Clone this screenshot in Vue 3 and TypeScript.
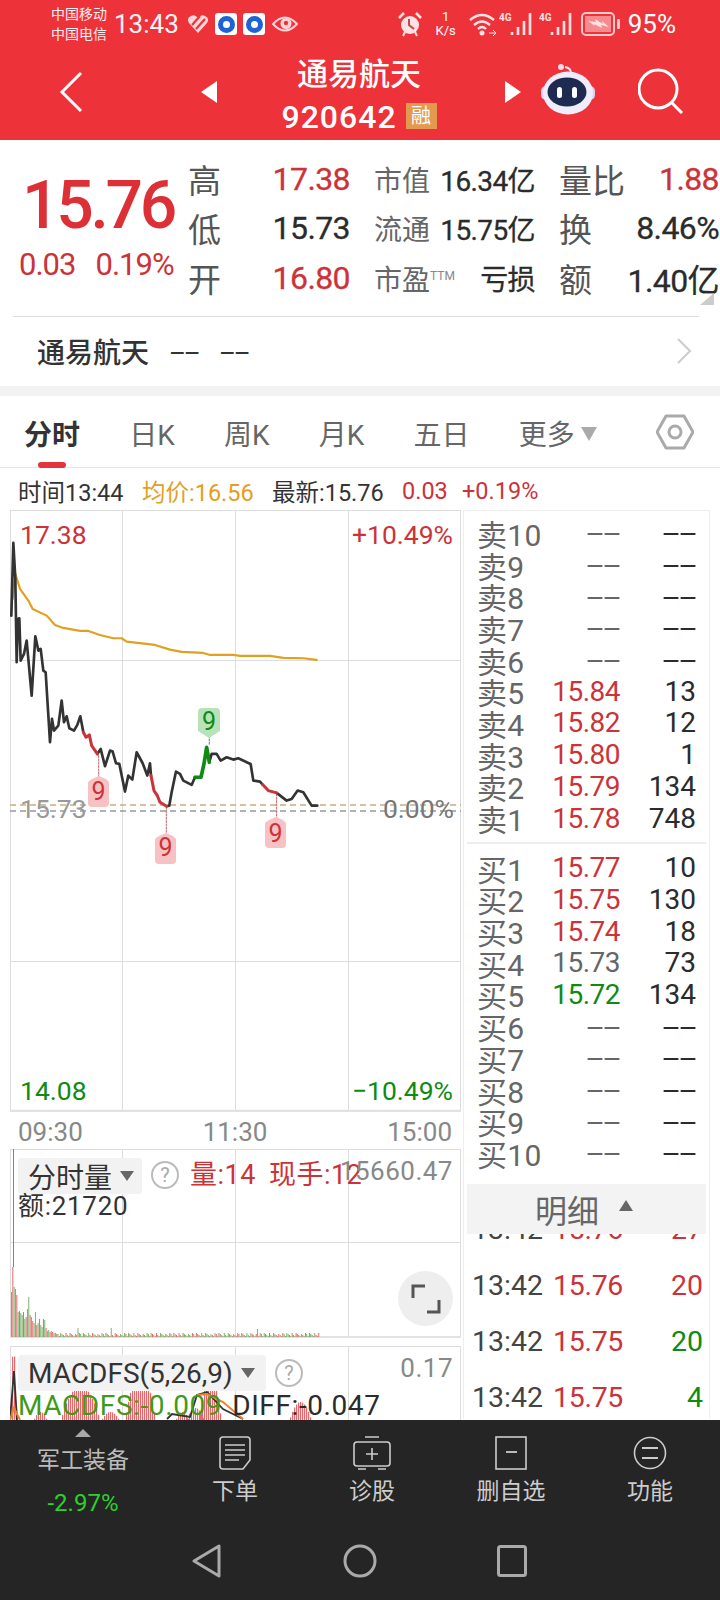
<script setup lang="ts">
const sell = [
  ['卖10', '--', '--', 'g'], ['卖9', '--', '--', 'g'], ['卖8', '--', '--', 'g'], ['卖7', '--', '--', 'g'], ['卖6', '--', '--', 'g'],
  ['卖5', '15.84', '13', 'r'], ['卖4', '15.82', '12', 'r'], ['卖3', '15.80', '1', 'r'], ['卖2', '15.79', '134', 'r'], ['卖1', '15.78', '748', 'r'],
]
const buy = [
  ['买1', '15.77', '10', 'r'], ['买2', '15.75', '130', 'r'], ['买3', '15.74', '18', 'r'], ['买4', '15.73', '73', 'g'], ['买5', '15.72', '134', 'v'],
  ['买6', '--', '--', 'g'], ['买7', '--', '--', 'g'], ['买8', '--', '--', 'g'], ['买9', '--', '--', 'g'], ['买10', '--', '--', 'g'],
]
const ticks = [
  ['13:42', '15.76', '20', 'r'], ['13:42', '15.75', '20', 'v'], ['13:42', '15.75', '4', 'v'],
]
const tabs = ['日K', '周K', '月K', '五日']
const quote = [
  { a: '高', av: '17.38', ac: 'r', b: '市值', bv: '16.34亿', c: '量比', cv: '1.88', cc: 'r' },
  { a: '低', av: '15.73', ac: 'k', b: '流通', bv: '15.75亿', c: '换', cv: '8.46%', cc: 'k' },
  { a: '开', av: '16.80', ac: 'r', b: '市盈', bv: '亏损', c: '额', cv: '1.40亿', cc: 'k' },
]
const pts = (a: number[][]) => a.map((p) => p.join(',')).join(' ')
const black = [
  [[34,290],[40,72],[46,180],[50,430],[54,300],[58,298],[62,425],[72,405],[80,365],[95,530],[106,352],[115,395],[122,390],[130,455],[137,460],[150,670],[156,600],[162,635],[175,620],[185,545],[192,610],[200,592],[208,628],[222,635],[232,618],[241,592],[250,640]],
  [[292,705],[302,690],[315,742],[330,695],[338,698],[348,733],[358,735],[375,818],[385,770],[397,782],[410,700],[428,733],[442,770],[450,733],[453,770]],
  [[500,862],[508,860],[515,820],[528,758],[540,765],[550,785],[575,798],[585,775]],
  [[628,730],[635,705],[650,705],[662,725],[680,715],[700,722],[715,718],[745,732],[752,735],[760,785],[780,788],[788,797]],
  [[830,822],[860,845],[875,840],[893,815],[910,820],[935,860],[952,860]],
].map(pts)
const red = [
  [[250,640],[258,655],[268,648],[275,680],[292,705]],
  [[453,770],[462,815],[472,830],[480,850],[500,862]],
  [[788,797],[805,815],[830,822]],
].map(pts)
const green = pts([[585,775],[603,775],[612,735],[620,685],[628,730]])
const avg = pts([[38,240],[46,165],[60,210],[85,245],[98,270],[140,290],[165,318],[190,327],[240,336],[265,336],[300,348],[340,358],[365,358],[380,368],[465,378],[510,392],[545,399],[610,402],[630,408],[700,408],[720,411],[810,411],[850,417],[910,418],[950,423]])

const tagUp = (x: number, y: number) =>
  `M${x} ${y + 6} L${x + 4} ${y + 3} L${x + 11} ${y} L${x + 18} ${y + 3} L${x + 21} ${y + 6} V${y + 27} Q${x + 21} ${y + 31} ${x + 17} ${y + 31} H${x + 4} Q${x} ${y + 31} ${x} ${y + 27} Z`
const tagDown = (x: number, y: number) =>
  `M${x} ${y + 4} Q${x} ${y} ${x + 4} ${y} H${x + 18} Q${x + 22} ${y} ${x + 22} ${y + 4} V${y + 23} L${x + 11} ${y + 30} L${x} ${y + 23} Z`
const pinks = [
  { d: tagUp(78, 266), x: 88.5, y: 290 },
  { d: tagUp(145, 323), x: 155.5, y: 346 },
  { d: tagUp(255, 307), x: 265.5, y: 332 },
]

const head = [45,70,50,48,42,25,26,24,22,25,18,20,28,40,22,20,16,14,25,12,14,18,12,10,18,17,9,6,7,5,6,5,4,4,3,3]
const volBars = Array.from({ length: 232 }, (_, i) => {
  const seed = (i * 37 + 11) % 17
  let h = i < head.length ? head[i] : 1 + (seed % 4)
  if (i === 50 || i === 75) h = 9
  if (i === 185) h = 8
  return { x: 11 + i * 1.33, h, up: (i * 7 + 3) % 5 < 2 }
})
const humps = [[13, 70, 3], [40, 8, 6], [80, 34, 18], [110, 8, 8], [140, 48, 14], [182, 8, 6], [195, 12, 8], [210, 44, 10], [300, 18, 10]]
const macdBars: { x: number; h: number }[] = []
for (const [cx, peak, w] of humps) {
  for (let x = cx - w; x <= cx + w; x += 2) {
    const d = Math.abs(x - cx) / w
    macdBars.push({ x, h: peak * (1 - d * d * 0.85) })
  }
}
</script>

<template>
  <div class="page">
    <header class="head">
      <div class="status">
        <div class="carriers"><span>中国移动</span><span>中国电信</span></div>
        <span class="clock">13:43</span>
        <svg class="heart" width="22" height="20" viewBox="0 0 22 20"><path d="M11 19 L2 9 Q-1 4 4 2 Q8 0 11 4 Q14 0 18 2 Q23 4 20 9 Z" fill="#ffd5d7"/><path d="M5 11 L13 2 M9 15 L18 5" stroke="#ee323a" stroke-width="2.2"/></svg>
        <span class="app"><i></i></span>
        <span class="app"><i></i></span>
        <svg class="eye" width="26" height="20" viewBox="0 0 26 20"><path d="M1 10 Q13 -3 25 10 Q13 23 1 10 Z" fill="none" stroke="#ffd5d7" stroke-width="2"/><circle cx="14" cy="9.500" r="5.500" fill="#ffd5d7"/><circle cx="14" cy="9" r="2.200" fill="#ee323a"/></svg>
        <div class="grow"></div>
        <svg class="s-alarm" width="24" height="26" viewBox="0 0 24 26"><circle cx="12" cy="14" r="9" fill="#ffe3e4"/><path d="M11 8 V14 L16 18" fill="none" stroke="#c9434a" stroke-width="2"/><path d="M1 7 L6 2 M23 7 L18 2" stroke="#ffe3e4" stroke-width="2.500"/><path d="M5 25 L7 21 M19 25 L17 21" stroke="#ffe3e4" stroke-width="2"/></svg>
        <div class="speed"><span>1</span><span>K/s</span></div>
        <svg class="s-wifi" width="28" height="26" viewBox="0 0 28 26"><path d="M1 9 Q13 -1 25 9 M5 14 Q13 7 21 14 M9 18 Q13 14 17 18" fill="none" stroke="#ffe3e4" stroke-width="2.400"/><circle cx="13" cy="22" r="2.500" fill="#ffe3e4"/><path d="M20 22 H27 M24 19 L27 22 L24 25" fill="none" stroke="#ffe3e4" stroke-width="1"/></svg>
        <svg class="s-sig" width="34" height="26" viewBox="0 0 34 26"><text x="0" y="10" class="mini">4G</text><path d="M13 24V21M19 24V16M25 24V10M31 24V2" stroke="#ffe3e4" stroke-width="2.600"/></svg>
        <svg class="s-sig2" width="34" height="26" viewBox="0 0 34 26"><text x="0" y="10" class="mini">4G</text><path d="M13 24V21M19 24V16M25 24V10M31 24V2" stroke="#ffe3e4" stroke-width="2.600"/></svg>
        <svg class="s-bat" width="40" height="24" viewBox="0 0 40 24"><rect x="1" y="1" width="32" height="22" rx="4" fill="none" stroke="#ffc9cc" stroke-width="2"/><rect x="4" y="4" width="26" height="16" fill="#f58a8f"/><path d="M7 9 L15 10 L14 7 L22 12 L21 9 L28 15 L20 13 L21 16 L13 12 L14 14 Z" fill="#ffe3e4"/><rect x="36" y="7" width="3" height="10" rx="1" fill="#ffc9cc"/></svg>
        <span class="pct">95%</span>
      </div>
      <div class="nav">
        <svg class="back" width="26" height="42" viewBox="0 0 26 42"><path d="M23 2 L4 21 L23 40" fill="none" stroke="#fff" stroke-width="3"/></svg>
        <svg class="tri-l" width="16" height="22" viewBox="0 0 16 22"><path d="M16 0 V22 L0 11 Z" fill="#fff"/></svg>
        <div class="title">
          <span class="name">通易航天</span>
          <div class="codeline"><span class="code">920642</span><span class="rong">融</span></div>
        </div>
        <svg class="tri-r" width="16" height="22" viewBox="0 0 16 22"><path d="M0 0 V22 L16 11 Z" fill="#fff"/></svg>
        <svg class="robot" width="56" height="52" viewBox="0 0 56 52"><path d="M31 9 Q31 4 25 3" fill="none" stroke="#e8e4f8" stroke-width="2"/><circle cx="21" cy="3" r="3" fill="#f3d7e2"/><rect x="1" y="22" width="54" height="14" rx="5" fill="#d9d2f2"/><ellipse cx="28" cy="29" rx="25" ry="21.500" fill="#f0edfb"/><ellipse cx="27" cy="28" rx="19.500" ry="14.500" fill="#1e2a4f"/><rect x="17" y="23" width="5" height="11" rx="2.500" fill="#fff"/><rect x="32" y="23" width="5" height="11" rx="2.500" fill="#fff"/></svg>
        <svg class="search" width="46" height="46" viewBox="0 0 46 46"><circle cx="20" cy="21" r="19" fill="none" stroke="#fff" stroke-width="3"/><path d="M34 35 L44 45" stroke="#fff" stroke-width="3"/></svg>
      </div>
    </header>

    <section class="summary">
      <div class="price">
        <div class="big">15.76</div>
        <div class="chg"><span>0.03</span><span>0.19%</span></div>
      </div>
      <div class="quote">
        <template v-for="q in quote" :key="q.a">
          <div class="cell"><span class="lab lg">{{ q.a }}</span><span class="val" :class="q.ac">{{ q.av }}</span></div>
          <div class="cell"><span class="lab md">{{ q.b }}<sup v-if="q.b === '市盈'">TTM</sup></span><span class="val sm k">{{ q.bv }}</span></div>
          <div class="cell"><span class="lab lg">{{ q.c }}</span><span class="val" :class="q.cc">{{ q.cv }}</span></div>
        </template>
        <i class="corner"></i>
      </div>
    </section>
    <div class="company">
      <span class="cname">通易航天</span>
      <span class="dash">--</span>
      <span class="dash">--</span>
      <svg class="more" width="16" height="28" viewBox="0 0 16 28"><path d="M2 2 L14 14 L2 26" fill="none" stroke="#ccc" stroke-width="2"/></svg>
    </div>
    <div class="band"></div>

    <nav class="tabs">
      <span class="tab on">分时<i></i></span>
      <span v-for="t in tabs" :key="t" class="tab">{{ t }}</span>
      <span class="tab">更多<b class="caret"></b></span>
      <svg class="hex" width="38" height="38" viewBox="0 0 38 38"><path d="M10 3 H28 L37 19 L28 35 H10 L1 19 Z" fill="none" stroke="#aaa" stroke-width="3" stroke-linejoin="round"/><circle cx="19" cy="19" r="6" fill="none" stroke="#aaa" stroke-width="3"/></svg>
    </nav>
    <div class="info">
      <span class="i1">时间13:44</span>
      <span class="i2">均价:16.56</span>
      <span class="i3">最新:15.76</span>
      <span class="i4">0.03</span>
      <span class="i5">+0.19%</span>
    </div>

    <main class="main">
      <div class="left">
        <div class="chart">
          <svg class="plot" width="453" height="602" viewBox="0 0 453 602">
            <path d="M0.500 0V602M112.500 0V602M225.500 0V602M338.500 0V602M450.500 0V602M0 0.500H451M0 150.500H451M0 451.500H451" stroke="#ddd" stroke-width="1" fill="none"/>
            <path d="M0 601H451" stroke="#e2e2e2" stroke-width="2.500"/>
            <path d="M0 295H451" stroke="#c9ad7f" stroke-width="1.500" stroke-dasharray="6 4" />
            <path d="M0 301H451" stroke="#999" stroke-width="1.500" stroke-dasharray="6 4" />
            <g transform="translate(-10 -511) scale(.3333) translate(0 1560)" fill="none" stroke-linejoin="round" stroke-linecap="round">
              <polyline :points="avg" stroke="#e2a01f" stroke-width="6.500"/>
              <polyline v-for="(p, i) in black" :key="i" :points="p" stroke="#333" stroke-width="8"/>
              <polyline v-for="(p, i) in red" :key="'r' + i" :points="p" stroke="#cc3338" stroke-width="9"/>
              <polyline :points="green" stroke="#0f8a12" stroke-width="11"/>
              <path d="M296 710V775M499 865V940M830 825V900" stroke="#b5474c" stroke-width="2.500" stroke-dasharray="6 4"/>
              <path d="M628 650V680" stroke="#0f8a12" stroke-width="2.500" stroke-dasharray="6 4"/>
            </g>
            <g class="badge">
              <g v-for="(b, i) in pinks" :key="i">
                <path :d="b.d" fill="#f7c2c4"/>
                <text :x="b.x" :y="b.y" fill="#cc3338">9</text>
              </g>
              <path :d="tagDown(188, 198)" fill="#b8e2b9"/>
              <text x="199" y="220" fill="#0f8a12">9</text>
            </g>
          </svg>
          <span class="ax tl r">17.38</span>
          <span class="ax tr r">+10.49%</span>
          <span class="ax ml">15.73</span>
          <span class="ax mr">0.00%</span>
          <span class="ax bl v">14.08</span>
          <span class="ax br v">−10.49%</span>
        </div>
        <div class="times"><span>09:30</span><span>11:30</span><span>15:00</span></div>
        <div class="vol">
          <svg class="plot" width="453" height="189" viewBox="0 0 453 189">
            <path d="M0.500 0V189M112.500 0V189M225.500 0V189M338.500 0V189M450.500 0V189M0 0.500H451M0 93.500H451" stroke="#ddd" fill="none"/>
            <path d="M0 188H451" stroke="#e2e2e2" stroke-width="2"/>
            <path d="M3.500 0V118" stroke="#dd5a5f" stroke-width="1"/>
            <rect v-for="(b, i) in volBars" :key="i" :x="b.x - 10" :y="188 - b.h" width="1" :height="b.h" :fill="b.up ? '#e4686c' : '#7cb56a'"/>
          </svg>
          <div class="chip"><span>分时量</span><b class="caret dk"></b></div>
          <span class="help h1">?</span>
          <span class="volread"><em>量:14</em><em>现手:12</em></span>
          <span class="amount">额:21720</span>
          <span class="scale">15660.47</span>
          <div class="zoomb">
            <svg width="30" height="30" viewBox="0 0 30 30"><path d="M2 14 V2 H14 M28 16 V28 H16" fill="none" stroke="#555" stroke-width="3"/></svg>
          </div>
        </div>
        <div class="macd">
          <svg class="plot" width="453" height="80" viewBox="0 0 453 80">
            <path d="M0.500 0V80M112.500 0V80M225.500 0V80M338.500 0V80M450.500 0V80M0 0.500H451" stroke="#ddd" fill="none"/>
            <rect v-for="(b, i) in macdBars" :key="i" :x="b.x - 10" :y="74 - b.h" width="1.200" :height="b.h" fill="#e4686c"/>
            <path d="M0 74 L4 25 L7 74 M157 73 L162 68 L180 71 L187 49 L197 46 L213 63 L233 73" fill="none" stroke="#333" stroke-width="1.800"/>
            <path d="M0 74 L4 62 L10 74 M187 49 L197 48 L213 56 L233 73" fill="none" stroke="#ee8030" stroke-width="2"/>
          </svg>
          <div class="chip wide"><span>MACDFS(5,26,9)</span><b class="caret dk"></b></div>
          <span class="help h2">?</span>
          <span class="scale">0.17</span>
          <span class="mline"><em class="v2">MACDFS:-0.009</em><em class="k">DIFF:-0.047</em></span>
        </div>
      </div>

      <aside class="book">
        <div v-for="r in sell" :key="r[0]" class="brow">
          <span class="bl1">{{ r[0] }}</span>
          <span class="bp" :class="r[3]"><span :class="{ dashes: r[1] === '--' }">{{ r[1] }}</span></span>
          <span class="bq k"><span :class="{ dashes: r[2] === '--' }">{{ r[2] }}</span></span>
        </div>
        <div class="bsep"></div>
        <div v-for="r in buy" :key="r[0]" class="brow">
          <span class="bl1">{{ r[0] }}</span>
          <span class="bp" :class="r[3]"><span :class="{ dashes: r[1] === '--' }">{{ r[1] }}</span></span>
          <span class="bq k"><span :class="{ dashes: r[2] === '--' }">{{ r[2] }}</span></span>
        </div>
        <div class="detail"><span>明细</span><b class="caret up"></b></div>
        <div class="ticks">
          <div class="tick"><span class="tt">13:42</span><span class="r tp">15.76</span><span class="r tq">27</span></div>
          <div v-for="(t, i) in ticks" :key="i" class="tick">
            <span class="tt">{{ t[0] }}</span><span class="r tp">{{ t[1] }}</span><span class="tq" :class="t[3]">{{ t[2] }}</span>
          </div>
        </div>
      </aside>
    </main>

    <footer class="foot">
      <div class="actions">
        <div class="sector">
          <b class="caret upw"></b>
          <span class="sname">军工装备</span>
          <span class="spct">-2.97%</span>
        </div>
        <div class="act">
          <svg width="32" height="34" viewBox="0 0 32 34"><path d="M4 1 H28 Q31 1 31 4 V24 L24 33 H4 Q1 33 1 30 V4 Q1 1 4 1 Z" fill="none" stroke="#ccc" stroke-width="1.600"/><path d="M6 9H26M6 14H26M6 19H26M6 24H20" stroke="#ccc" stroke-width="1.600"/></svg>
          <span>下单</span>
        </div>
        <div class="act">
          <svg width="38" height="34" viewBox="0 0 38 34"><rect x="1" y="6" width="36" height="24" rx="3" fill="none" stroke="#ccc" stroke-width="1.600"/><path d="M12 1H26M5 33H13M25 33H33M19 12V24M13 18H25" stroke="#ccc" stroke-width="1.600"/></svg>
          <span>诊股</span>
        </div>
        <div class="act">
          <svg width="32" height="34" viewBox="0 0 32 34"><rect x="1" y="1" width="30" height="32" fill="none" stroke="#ccc" stroke-width="1.600"/><path d="M11 16H22" stroke="#ccc" stroke-width="1.800"/></svg>
          <span>删自选</span>
        </div>
        <div class="act">
          <svg width="34" height="34" viewBox="0 0 34 34"><circle cx="17" cy="17" r="15.500" fill="none" stroke="#ccc" stroke-width="1.600"/><path d="M9 12H25M9 22H25" stroke="#ccc" stroke-width="1.800"/></svg>
          <span>功能</span>
        </div>
      </div>
      <div class="sysnav">
        <svg width="32" height="34" viewBox="0 0 32 34"><path d="M28 2 V32 L3 17 Z" fill="none" stroke="#aaa" stroke-width="3" stroke-linejoin="round"/></svg>
        <svg width="34" height="34" viewBox="0 0 34 34"><circle cx="17" cy="17" r="15" fill="none" stroke="#aaa" stroke-width="3"/></svg>
        <svg width="30" height="32" viewBox="0 0 30 32"><rect x="1.500" y="1.500" width="27" height="29" rx="2" fill="none" stroke="#aaa" stroke-width="3"/></svg>
      </div>
    </footer>
  </div>
</template>

<style>
html, body { margin: 0; background: #fff; }
</style>

<style scoped>
.page { width: 720px; height: 1600px; overflow: hidden; display: flex; flex-direction: column; background: #fff; font-family: Roboto, "Noto Sans CJK SC", sans-serif; color: #333; }
em { font-style: normal; }
i { display: block; }
.r { color: #cc3338; }
.k { color: #2b2b2b; }
.v { color: #0f8a12; }
.g { color: #666; }

.head { height: 140px; background: #ee323a; color: #fff; flex: none; display: flex; flex-direction: column; }
.status { height: 48px; display: flex; align-items: center; padding: 0 44px 0 51px; }
.carriers { display: flex; flex-direction: column; font-size: 14px; line-height: 20px; width: 63px; opacity: .92; flex: none; }
.clock { font-size: 26px; width: 73px; opacity: .95; flex: none; }
.heart { margin-right: 6px; flex: none; }
.app { width: 22px; height: 22px; background: #fff; border-radius: 3px; margin-right: 6px; display: flex; align-items: center; justify-content: center; flex: none; }
.app i { width: 17px; height: 17px; border-radius: 50%; border: 5px solid #1f62d6; box-sizing: border-box; }
.eye { margin-left: 1px; flex: none; }
.grow { flex: 1; }
.speed { display: flex; flex-direction: column; align-items: center; font-size: 13px; line-height: 14px; width: 24px; margin-left: 12px; flex: none; white-space: nowrap; }
.mini { font-size: 10px; fill: #ffe3e4; font-weight: 700; font-family: Roboto, sans-serif; }
.s-alarm { flex: none; }
.s-wifi { margin-left: 11px; flex: none; }
.s-sig { margin-left: 2px; flex: none; }
.s-sig2 { margin-left: 6px; flex: none; }
.s-bat { margin-left: 8px; flex: none; }
.pct { font-size: 26px; margin-left: 7px; flex: none; }
.nav { height: 92px; position: relative; display: flex; align-items: center; }
.back { margin-left: 58px; margin-top: -4px; }
.tri-l { margin-left: 117px; margin-top: -4px; }
.title { width: 288px; padding-right: 4px; box-sizing: border-box; display: flex; flex-direction: column; align-items: center; margin-top: 2px; }
.name { font-size: 31px; line-height: 40px; font-weight: 500; }
.codeline { display: flex; align-items: center; gap: 9px; margin-top: 3px; margin-left: 0; }
.code { font-size: 32px; line-height: 38px; font-weight: 500; letter-spacing: 1px; }
.rong { width: 31px; height: 26px; background: #e39a50; color: #fff; font-size: 20px; line-height: 26px; text-align: center; margin-top: -2px; }
.tri-r { margin-top: -4px; }
.robot { margin-left: 19px; margin-top: -9px; }
.search { margin-left: 42px; margin-top: -6px; }

.summary { height: 176px; display: flex; flex: none; }
.price { width: 188px; padding-left: 19px; box-sizing: border-box; }
.big { font-size: 66px; font-weight: 500; color: #dd3036; line-height: 66px; margin-top: 33px; letter-spacing: -3.300px; margin-left: 3px; white-space: nowrap; }
.chg { display: flex; gap: 20px; font-size: 31px; color: #cc3338; margin-top: 8px; letter-spacing: -1px; line-height: 36px; white-space: nowrap; }
.quote { position: relative; display: grid; grid-template-columns: 162px 161px 160px; column-gap: 24px; grid-auto-rows: 49.500px; padding-top: 14px; }
.cell { display: flex; justify-content: space-between; align-items: center; white-space: nowrap; }
.lab { color: #555; }
.lg { font-size: 33px; }
.md { font-size: 28px; color: #666; }
.md sup { font-size: 12px; color: #888; vertical-align: 10px; line-height: 0; }
.val { font-size: 32px; letter-spacing: -.6px; font-weight: 400; -webkit-text-stroke: .3px currentColor; }
.val.sm { font-size: 28px; }
.corner { position: absolute; right: 5px; bottom: 11px; width: 0; height: 0; border-left: 14px solid transparent; border-bottom: 12px solid #ccc; }
.company { margin: 0 13px; width: 686px; border-top: 1px solid #ddd; height: 69px; display: flex; align-items: center; padding-left: 24px; box-sizing: border-box; flex: none; position: relative; }
.cname { font-size: 28px; font-weight: 500; color: #333; margin-right: 21px; }
.dash { display: inline-block; white-space: nowrap; font-size: 28px; color: #333; margin-right: 35px; width: 15.400px; transform: scaleX(1.900); transform-origin: 0 50%; }
.more { position: absolute; right: 7px; top: 20px; }
.band { height: 10px; margin-top: 1px; background: #f2f2f2; flex: none; }

.tabs { height: 72px; display: flex; align-items: center; padding-left: 24px; gap: 49.200px; border-bottom: 1px solid #e5e5e5; position: relative; flex: none; box-sizing: border-box; }
.tab { font-size: 28px; color: #666; position: relative; white-space: nowrap; margin-top: 3px; }
.tab.on { font-weight: 700; color: #333; }
.tab.on i { position: absolute; left: 14px; bottom: -15px; width: 28px; height: 6px; border-radius: 3px; background: #e3343a; }
.hex { position: absolute; left: 656px; top: 17px; }
.caret { display: inline-block; width: 0; height: 0; border-left: 8px solid transparent; border-right: 8px solid transparent; border-top: 14px solid #aaa; margin-left: 6px; vertical-align: 4px; }
.info { height: 42px; padding-top: 4px; box-sizing: border-box; display: flex; align-items: center; font-size: 23.500px; flex: none; white-space: nowrap; }
.i1 { margin-left: 18px; width: 124px; color: #333; }
.i2 { width: 130px; color: #e2a01f; }
.i3 { width: 130px; color: #333; }
.i4 { width: 60px; color: #cc3338; }
.i5 { color: #cc3338; }

.main { flex: 1; min-height: 0; display: flex; overflow: hidden; }
.left { width: 463px; padding-left: 10px; box-sizing: border-box; flex: none; }
.plot { position: absolute; left: 0; top: 0; }
.chart { position: relative; height: 602px; }
.badge text { font-size: 25px; text-anchor: middle; font-family: Roboto, sans-serif; }
.ax { position: absolute; font-size: 26.500px; line-height: 30px; }
.tl { left: 10px; top: 10px; }
.tr { right: 10px; top: 10px; }
.ml { left: 10px; top: 284px; color: #999; }
.mr { right: 9px; top: 284px; color: #777; }
.bl { left: 10px; bottom: 6px; }
.br { right: 10px; bottom: 6px; }
.times { height: 37px; padding: 3px 11px 0 8px; display: flex; justify-content: space-between; align-items: center; font-size: 26px; color: #888; box-sizing: border-box; }
.vol { position: relative; height: 189px; margin-bottom: 8px; }
.macd { position: relative; height: 80px; }
.chip { position: absolute; left: 8px; top: 9px; height: 36px; width: 124px; background: #f2f2f2; border-radius: 4px; display: flex; align-items: center; padding-left: 10px; box-sizing: border-box; font-size: 28px; color: #333; white-space: nowrap; }
.chip.wide { width: 248px; }
.caret.dk { border-top-color: #666; border-left-width: 7px; border-right-width: 7px; border-top-width: 10px; margin-left: 8px; vertical-align: 0; }
.help { position: absolute; width: 24px; height: 24px; border: 2px solid #bbb; border-radius: 50%; color: #aaa; font-size: 20px; line-height: 24px; text-align: center; }
.h1 { left: 141px; top: 12px; }
.h2 { left: 265px; top: 13px; }
.volread { position: absolute; left: 180px; top: 8px; font-size: 27px; letter-spacing: .5px; line-height: 36px; color: #cc3338; display: flex; gap: 13px; white-space: nowrap; }
.amount { position: absolute; left: 8px; top: 41px; font-size: 26px; letter-spacing: .7px; line-height: 32px; color: #333; }
.scale { position: absolute; right: 10px; top: 5px; font-size: 26px; line-height: 34px; color: #888; letter-spacing: .5px; }
.zoomb { position: absolute; right: 10px; top: 122px; width: 55px; height: 55px; border-radius: 50%; background: #eee; display: flex; align-items: center; justify-content: center; }
.mline { position: absolute; left: 8px; top: 44px; font-size: 28px; letter-spacing: .6px; line-height: 32px; display: flex; gap: 10px; white-space: nowrap; }
.v2 { color: #3f9a1a; }

.book { width: 247px; border: 1px solid #eee; border-bottom: 0; box-sizing: border-box; padding-top: 6px; height: 909px; position: relative; }
.brow { height: 31.700px; display: flex; align-items: center; padding: 0 13px 0 13px; white-space: nowrap; font-size: 28px; }
.bl1 { width: 73px; font-size: 30px; letter-spacing: .3px; color: #666; flex: none; }
.bp { width: 70px; text-align: right; letter-spacing: -.5px; flex: none; }
.bq { flex: 1; text-align: right; }
.dashes { display: inline-block; transform: scaleX(2.200); transform-origin: 100% 50%; letter-spacing: 0; white-space: nowrap; }
.bsep { height: 2px; background: #eee; margin: 8px 3px 8px; }
.detail { height: 50px; margin: 15px 3px 0; background: #f3f3f3; display: flex; align-items: center; justify-content: center; font-size: 32px; color: #666; position: relative; z-index: 1; padding-right: 5px; box-sizing: border-box; }
.caret.up { border-top: 0; border-bottom: 11px solid #666; border-left-width: 7px; border-right-width: 7px; margin-left: 20px; margin-top: -6px; }
.ticks { margin-top: -32px; }
.tick { height: 56px; display: flex; align-items: center; padding: 0 6px 0 8px; font-size: 28.500px; }
.tt { width: 81px; color: #444; flex: none; }
.tp { letter-spacing: -.3px; }
.tq { flex: 1; text-align: right; }

.foot { height: 180px; background: #252525; flex: none; position: relative; z-index: 2; }
.actions { height: 108px; display: flex; position: relative; }
.sector { width: 166px; display: flex; flex-direction: column; align-items: center; padding-top: 9px; box-sizing: border-box; }
.caret.upw { border-top: 0; border-bottom: 8px solid #aaa; margin: 0; }
.sname { font-size: 23px; color: #bbb; margin-top: 9px; line-height: 30px; }
.spct { font-size: 24px; color: #2ad22a; margin-top: 12px; line-height: 30px; }
.act { position: absolute; top: 16px; display: flex; flex-direction: column; align-items: center; color: #ccc; font-size: 23px; width: 100px; gap: 7px; line-height: 30px; }
.act:nth-child(2) { left: 185px; }
.act:nth-child(3) { left: 322px; }
.act:nth-child(4) { left: 461px; }
.act:nth-child(5) { left: 600px; }
.sysnav { height: 72px; display: flex; align-items: center; padding-left: 191px; gap: 120px; margin-top: -3px; }
</style>
